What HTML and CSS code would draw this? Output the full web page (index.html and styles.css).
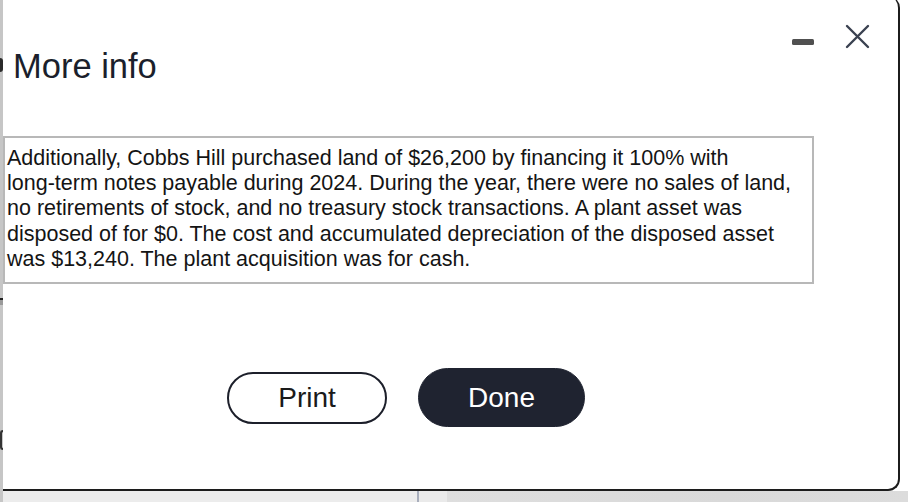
FILE: index.html
```html
<!DOCTYPE html>
<html lang="en">
<head>
<meta charset="utf-8">
<title>More info</title>
<link rel="stylesheet" href="styles.css">
</head>
<body>
<div class="screen">
  <div class="behind">
    <div class="strip">
      <div class="strip-gap g1"></div>
      <div class="strip-mark m1"></div>
      <div class="strip-gap g2"></div>
      <div class="strip-line"></div>
      <div class="strip-band"></div>
      <div class="strip-gap g3"></div>
      <div class="strip-mark m2"></div>
    </div>
    <div class="page">
      <div class="page-top"></div>
      <div class="page-bottom">
        <div class="pb-a"></div>
        <div class="pb-line"></div>
        <div class="pb-b"></div>
        <div class="pb-c"></div>
      </div>
    </div>
  </div>

  <div class="dialog">
    <div class="header">
      <h1 class="title">More info</h1>
      <div class="controls">
        <span class="minimize"></span>
        <svg class="close" width="25" height="25" viewBox="0 0 25 25" aria-label="Close">
          <path d="M2 2 L23 23 M23 2 L2 23" stroke="#3a4150" stroke-width="2.4" stroke-linecap="round" fill="none"/>
        </svg>
      </div>
    </div>
    <div class="content">
      <div class="infobox">Additionally, Cobbs Hill purchased land of $26,200 by financing it 100% with<br>long-term notes payable during 2024. During the year, there were no sales of land,<br>no retirements of stock, and no treasury stock transactions. A plant asset was<br>disposed of for $0. The cost and accumulated depreciation of the disposed asset<br>was $13,240. The plant acquisition was for cash.</div>
      <div class="buttons">
        <button class="btn btn-print">Print</button>
        <button class="btn btn-done">Done</button>
      </div>
    </div>
  </div>
</div>
</body>
</html>
```

FILE: styles.css
```css
* { box-sizing: border-box; }
html, body { margin: 0; padding: 0; }
body {
  width: 908px;
  height: 502px;
  overflow: hidden;
  background: #ffffff;
  font-family: "Liberation Sans", Arial, Helvetica, sans-serif;
}
.screen {
  position: relative;
  width: 908px;
  height: 502px;
  overflow: hidden;
}
.behind {
  display: flex;
  width: 908px;
  height: 502px;
}
.strip {
  width: 3px;
  height: 502px;
  background: #c6c6c6;
  display: flex;
  flex-direction: column;
}
.g1 { height: 58px; }
.m1 { height: 14px; background: #2a2a2a; border-radius: 0 3px 3px 0; }
.g2 { height: 226px; }
.strip-line { height: 2px; background: #222; }
.strip-band { height: 5px; background: #9a9a9a; }
.g3 { height: 125px; }
.m2 { height: 20px; border: 2px solid #333; border-right: none; border-radius: 6px 0 0 6px; width: 3px; }
.page {
  flex: 1;
  display: flex;
  flex-direction: column;
}
.page-top { height: 491px; background: #fff; }
.page-bottom {
  flex: 1;
  display: flex;
}
.pb-a { width: 414px; background: #ececec; }
.pb-line { width: 2px; background: #a8aebc; }
.pb-b { width: 28px; background: #eaeaea; }
.pb-c { flex: 1; background: linear-gradient(90deg, #dedede, #d9d9d9 60%, #dcdcdc); }

.dialog {
  position: absolute;
  left: 3px;
  top: -4px;
  width: 897px;
  height: 495px;
  background: #fff;
  border-right: 2px solid #1c1c1c;
  border-bottom: 2px solid #1c1c1c;
  border-radius: 0 12px 12px 0;
  display: flex;
  flex-direction: column;
}
.header {
  display: flex;
  justify-content: space-between;
  align-items: flex-start;
}
.title {
  margin: 50px 0 0 10px;
  font-size: 34.5px;
  line-height: 40px;
  font-weight: normal;
  color: #1b1f2c;
}
.controls {
  display: flex;
  align-items: flex-start;
  gap: 31px;
  margin: 29px 28px 0 0;
}
.minimize {
  display: block;
  width: 22px;
  height: 6px;
  margin-top: 14px;
  background: #505050;
  border-radius: 1.5px;
}
.close { display: block; margin-top: -1px; }
.content {
  width: 811px;
  display: flex;
  flex-direction: column;
  margin-top: 50px;
}
.infobox {
  border: 2px solid #b8b8b8;
  padding: 8px 2px 10px 2px;
  font-size: 21.5px;
  line-height: 25.2px;
  color: #141414;
  white-space: nowrap;
}
.buttons {
  display: flex;
  justify-content: center;
  align-items: center;
  gap: 31px;
  margin-top: 84px;
  padding-right: 5px;
}
.btn {
  font-family: "Liberation Sans", Arial, Helvetica, sans-serif;
  font-size: 28px;
  border-radius: 30px;
  cursor: pointer;
  padding: 0;
}
.btn-print {
  width: 160px;
  height: 52px;
  background: #fff;
  color: #1a1a1a;
  border: 2px solid #1c1f2a;
}
.btn-done {
  width: 167px;
  height: 59px;
  background: #1f2330;
  color: #fff;
  border: 1px solid #1f2330;
}
```
